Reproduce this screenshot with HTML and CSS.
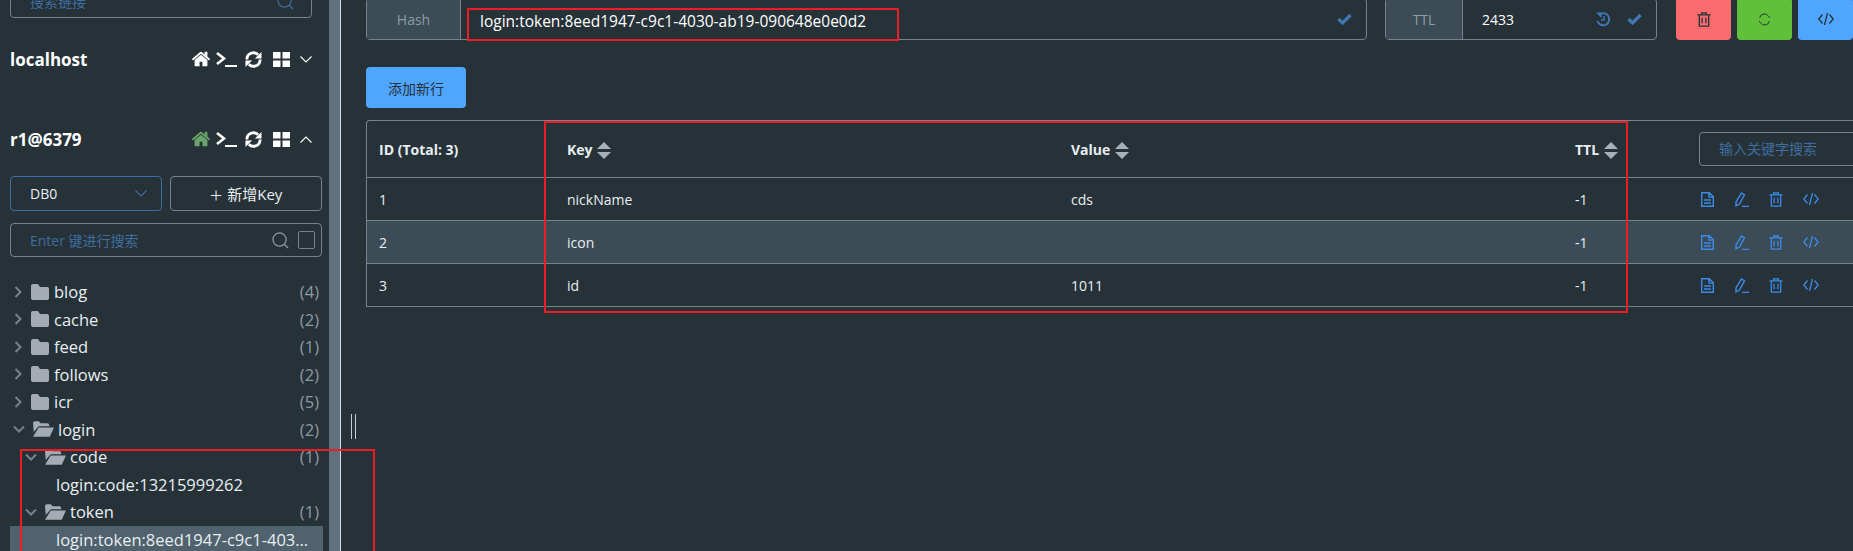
FILE: index.html
```html
<!DOCTYPE html>
<html lang="en">
<head>
    <meta charset="UTF-8">
    <meta name="viewport" content="width=device-width, initial-scale=1.0">
    <title>Redis Client</title>
    <link rel="stylesheet" href="styles.css">
</head>
<body>

<svg class="icon-defs" width="0" height="0">
    <symbol id="i-home" viewBox="0 0 1792 1792"><path fill="currentColor" d="M1472 992v480q0 26-19 45t-45 19h-384v-384h-256v384h-384q-26 0-45-19t-19-45v-480q0-1 .5-3t.5-3l575-474 575 474q1 2 1 6zm223-69l-62 74q-8 9-21 11h-3q-13 0-21-7l-692-577-692 577q-12 8-24 7-13-2-21-11l-62-74q-8-10-7-23.5t11-21.5l719-599q32-26 76-26t76 26l244 204v-195q0-14 9-23t23-9h192q14 0 23 9t9 23v408l219 182q10 8 11 21.5t-7 23.5z"/></symbol>
    <symbol id="i-term" viewBox="0 0 21 16"><path fill="none" stroke="currentColor" stroke-width="2.600" d="M1 2l7 5.500L1 13"/><path fill="none" stroke="currentColor" stroke-width="2" d="M9 15h12"/></symbol>
    <symbol id="i-sync" viewBox="0 0 18 18"><path fill="none" stroke="currentColor" stroke-width="3" d="M2 9a7 7 0 0 1 12-5M16 9a7 7 0 0 1-12 5"/><path fill="currentColor" d="M17.500 1v7h-7zM.5 17v-7h7z"/></symbol>
    <symbol id="i-grid" viewBox="0 0 17 15"><path fill="currentColor" d="M0 0h7.500v6.500H0zM9.500 0H17v6.500H9.500zM0 8.500h7.500V15H0zM9.500 8.500H17V15H9.500z"/></symbol>
    <symbol id="i-chev" viewBox="0 0 12 7"><path fill="none" stroke="currentColor" stroke-width="1.100" d="M.5.500l5.500 5.500 5.500-5.500"/></symbol>
    <symbol id="i-right" viewBox="0 0 8 12"><path fill="none" stroke="currentColor" stroke-width="2" d="M1.500 1l5 5-5 5"/></symbol>
    <symbol id="i-down" viewBox="0 0 12 8"><path fill="none" stroke="currentColor" stroke-width="2" d="M1 1.500l5 5 5-5"/></symbol>
    <symbol id="i-folder" viewBox="0 0 18 16"><path fill="currentColor" d="M2 0h5l2 3h7a2 2 0 0 1 2 2v9a2 2 0 0 1-2 2H2a2 2 0 0 1-2-2V2a2 2 0 0 1 2-2z"/></symbol>
    <symbol id="i-open" viewBox="0 0 22 16"><path fill="currentColor" d="M0 2a2 2 0 0 1 2-2h4l2 2h7a2 2 0 0 1 2 2v1H6L1 11V13zM6 6.500h16l-4.500 9.500H0z"/></symbol>
    <symbol id="i-search" viewBox="0 0 18 18"><circle cx="8" cy="8" r="7" fill="none" stroke="currentColor" stroke-width="1.300"/><path stroke="currentColor" stroke-width="1.300" d="M13 13l4 4"/></symbol>
    <symbol id="i-check" viewBox="0 0 15 12"><path fill="none" stroke="currentColor" stroke-width="3.200" d="M1.500 6l4 4 8-8"/></symbol>
    <symbol id="i-hist" viewBox="0 0 15 15"><path fill="none" stroke="currentColor" stroke-width="2" d="M3 3a6 6 0 1 1-1.500 6"/><path fill="currentColor" d="M0 .500l5.500 0-0 5.500z"/><path fill="none" stroke="currentColor" stroke-width="1.500" d="M8 4v4H5"/></symbol>
    <symbol id="i-trash" viewBox="0 0 14 16"><path fill="none" stroke="currentColor" stroke-width="1.400" d="M0 3h14M4.500 3V1h5v2M2 3v12h10V3M5 6v6M9 6v6"/></symbol>
    <symbol id="i-code" viewBox="0 0 16 12"><path fill="none" stroke="currentColor" stroke-width="1.300" d="M4.500 1.500L.8 6l3.700 4.500M11.500 1.500L15.200 6l-3.700 4.500M9.500 0l-3 12"/></symbol>
    <symbol id="i-doc" viewBox="0 0 13 15"><path fill="none" stroke="currentColor" stroke-width="1.400" d="M.7.700h7.600l4 4v9.600H.7zM8 .7v4.400h4.300M3 8h7M3 11h7"/></symbol>
    <symbol id="i-edit" viewBox="0 0 14 15"><path fill="none" stroke="currentColor" stroke-width="1.400" d="M6.500 1l3 1.800-5 9.200-3.500 1.800V10zM7 14.400h7"/></symbol>
</svg>

<aside class="sidebar">
    <div class="field conn-search">
        <span class="placeholder">搜索链接</span>
        <svg class="field-icon"><use href="#i-search"/></svg>
    </div>

    <div class="conn-row">
        <span class="conn-name">localhost</span>
        <div class="conn-icons">
            <svg class="ic-home"><use href="#i-home"/></svg>
            <svg class="ic-term"><use href="#i-term"/></svg>
            <svg class="ic-sync"><use href="#i-sync"/></svg>
            <svg class="ic-grid"><use href="#i-grid"/></svg>
            <svg class="ic-chev"><use href="#i-chev"/></svg>
        </div>
    </div>

    <div class="conn-row conn-open">
        <span class="conn-name">r1@6379</span>
        <div class="conn-icons">
            <svg class="ic-home is-on"><use href="#i-home"/></svg>
            <svg class="ic-term"><use href="#i-term"/></svg>
            <svg class="ic-sync"><use href="#i-sync"/></svg>
            <svg class="ic-grid"><use href="#i-grid"/></svg>
            <svg class="ic-chev is-up"><use href="#i-chev"/></svg>
        </div>
    </div>

    <div class="db-row">
        <div class="db-select">
            <span>DB0</span>
            <svg class="ic-chev"><use href="#i-chev"/></svg>
        </div>
        <div class="add-key">
            <span class="plus">+</span>
            <span>新增Key</span>
        </div>
    </div>

    <div class="field key-search">
        <span class="placeholder">Enter 键进行搜索</span>
        <svg class="field-icon"><use href="#i-search"/></svg>
        <span class="exact-box"></span>
    </div>

    <ul class="tree">
        <li class="node"><svg class="arrow"><use href="#i-right"/></svg><svg class="folder"><use href="#i-folder"/></svg><span class="name">blog</span><span class="count">(4)</span></li>
        <li class="node"><svg class="arrow"><use href="#i-right"/></svg><svg class="folder"><use href="#i-folder"/></svg><span class="name">cache</span><span class="count">(2)</span></li>
        <li class="node"><svg class="arrow"><use href="#i-right"/></svg><svg class="folder"><use href="#i-folder"/></svg><span class="name">feed</span><span class="count">(1)</span></li>
        <li class="node"><svg class="arrow"><use href="#i-right"/></svg><svg class="folder"><use href="#i-folder"/></svg><span class="name">follows</span><span class="count">(2)</span></li>
        <li class="node"><svg class="arrow"><use href="#i-right"/></svg><svg class="folder"><use href="#i-folder"/></svg><span class="name">icr</span><span class="count">(5)</span></li>
        <li class="node is-open"><svg class="arrow"><use href="#i-down"/></svg><svg class="folder"><use href="#i-open"/></svg><span class="name">login</span><span class="count">(2)</span></li>
        <li class="node is-open sub"><svg class="arrow"><use href="#i-down"/></svg><svg class="folder"><use href="#i-open"/></svg><span class="name">code</span><span class="count">(1)</span></li>
        <li class="node leaf"><span class="name">login:code:13215999262</span></li>
        <li class="node is-open sub"><svg class="arrow"><use href="#i-down"/></svg><svg class="folder"><use href="#i-open"/></svg><span class="name">token</span><span class="count">(1)</span></li>
        <li class="node leaf is-current"><span class="name">login:token:8eed1947-c9c1-4030-ab19-090648e0e0d2</span></li>
    </ul>
</aside>

<div class="splitter"></div>

<main class="content">
    <div class="key-bar">
        <div class="group hash-group">
            <span class="addon hash-addon">Hash</span>
            <span class="group-value">login:token:8eed1947-c9c1-4030-ab19-090648e0e0d2</span>
            <svg class="ic-check"><use href="#i-check"/></svg>
        </div>
        <div class="group ttl-group">
            <span class="addon ttl-addon">TTL</span>
            <span class="group-value">2433</span>
            <svg class="ic-hist"><use href="#i-hist"/></svg>
            <svg class="ic-check"><use href="#i-check"/></svg>
        </div>
        <button class="btn btn-red"><svg class="ic-trash"><use href="#i-trash"/></svg></button>
        <button class="btn btn-green"><svg class="ic-thin-sync" viewBox="0 0 16 16"><path fill="none" stroke="currentColor" stroke-width="1.200" d="M2 6a6 6 0 0 1 11-2l1.500 2M14 10a6 6 0 0 1-11 2L1.500 10"/></svg></button>
        <button class="btn btn-blue"><svg class="ic-code"><use href="#i-code"/></svg></button>
    </div>

    <button class="add-row">添加新行</button>

    <table class="data-table">
        <colgroup>
            <col class="col-id">
            <col class="col-key">
            <col class="col-value">
            <col class="col-ttl">
            <col>
        </colgroup>
        <thead>
            <tr>
                <th>ID (Total: 3)</th>
                <th>Key <span class="sort"></span></th>
                <th>Value <span class="sort"></span></th>
                <th>TTL <span class="sort"></span></th>
                <th><div class="table-search">输入关键字搜索</div></th>
            </tr>
        </thead>
        <tbody>
            <tr>
                <td>1</td><td>nickName</td><td>cds</td><td>-1</td>
                <td><div class="row-actions"><svg class="a-doc"><use href="#i-doc"/></svg><svg class="a-edit"><use href="#i-edit"/></svg><svg class="a-trash"><use href="#i-trash"/></svg><svg class="a-code"><use href="#i-code"/></svg></div></td>
            </tr>
            <tr class="is-hover">
                <td>2</td><td>icon</td><td></td><td>-1</td>
                <td><div class="row-actions"><svg class="a-doc"><use href="#i-doc"/></svg><svg class="a-edit"><use href="#i-edit"/></svg><svg class="a-trash"><use href="#i-trash"/></svg><svg class="a-code"><use href="#i-code"/></svg></div></td>
            </tr>
            <tr>
                <td>3</td><td>id</td><td>1011</td><td>-1</td>
                <td><div class="row-actions"><svg class="a-doc"><use href="#i-doc"/></svg><svg class="a-edit"><use href="#i-edit"/></svg><svg class="a-trash"><use href="#i-trash"/></svg><svg class="a-code"><use href="#i-code"/></svg></div></td>
            </tr>
        </tbody>
    </table>
</main>

<!-- drag handle and the red marks someone drew on the screenshot -->
<div class="drag-handle"></div>
<div class="mark mark-hash"></div>
<div class="mark mark-table"></div>
<div class="mark mark-tree"></div>

</body>
</html>
```

FILE: styles.css
```css
* {
    box-sizing: border-box;
}
body {
    font-family: "Open Sans", "Noto Sans CJK SC", sans-serif;
    font-size: 14px;
    background-color: #263238;
    color: #e8eef2;
    display: flex;
    width: 1853px;
    height: 551px;
    margin: 0;
    overflow: hidden;
    position: relative;
}
svg {
    display: block;
    flex: none;
}
.icon-defs {
    position: absolute;
}

/* sidebar */
.sidebar {
    width: 329px;
    flex: none;
    padding: 0 0 0 10px;
}
.field {
    display: flex;
    align-items: center;
    height: 34px;
    border: 1px solid #76838f;
    border-radius: 4px;
    padding: 0 9px 0 19px;
}
.placeholder {
    flex: 1;
    color: #3f6d9f;
}
.conn-search {
    width: 302px;
    margin-top: -16px;
}
.field-icon {
    width: 17px;
    height: 17px;
    color: #8c99a4;
}
.conn-search .field-icon {
    color: #3f6d9f;
    margin-right: 8px;
}
.conn-row {
    display: flex;
    align-items: center;
    justify-content: space-between;
    width: 302px;
    height: 40px;
    margin-top: 21px;
}
.conn-open {
    margin-top: 40px;
}
.conn-name {
    font-size: 17px;
    font-weight: 700;
    color: #fff;
}
.conn-icons {
    display: flex;
    align-items: center;
    color: #fff;
}
.ic-home {
    width: 20px;
    height: 20px;
}
.ic-home.is-on {
    color: #6aa36c;
}
.ic-term {
    width: 21px;
    height: 16px;
    margin-left: 5px;
}
.ic-sync {
    width: 17px;
    height: 17px;
    margin-left: 8px;
}
.ic-grid {
    width: 17px;
    height: 15px;
    margin-left: 11px;
}
.ic-chev {
    width: 12px;
    height: 7px;
    margin-left: 10px;
}
.ic-chev.is-up {
    transform: rotate(180deg);
}
.db-row {
    display: flex;
    gap: 8px;
    margin-top: 17px;
}
.db-select, .add-key {
    display: flex;
    align-items: center;
    width: 152px;
    height: 35px;
    border: 1px solid #76838f;
    border-radius: 4px;
}
.db-select {
    border-color: #3f6d9f;
    justify-content: space-between;
    padding: 0 14px 0 19px;
}
.db-select .ic-chev {
    color: #3f6d9f;
}
.add-key {
    justify-content: center;
    gap: 5px;
    font-size: 15px;
}
.plus {
    font-size: 22px;
    font-weight: 300;
    line-height: 1;
}
.key-search {
    width: 312px;
    margin-top: 12px;
    padding-right: 6px;
}
.exact-box {
    width: 17px;
    height: 18px;
    margin-left: 9px;
    border: 1px solid #76838f;
    border-radius: 2px;
}
.tree {
    list-style: none;
    width: 313px;
    margin: 21px 0 0;
    padding: 0;
    font-size: 16.5px;
}
.node {
    display: flex;
    align-items: center;
    height: 27.5px;
    padding: 0 4px 0 4px;
    white-space: nowrap;
}
.arrow {
    width: 8px;
    height: 12px;
    color: #77838c;
}
.is-open > .arrow {
    width: 12px;
    height: 8px;
    margin-left: -1px;
    margin-right: -1px;
}
.folder {
    width: 18px;
    height: 16px;
    margin-left: 9px;
    color: #a4abb2;
}
.is-open > .folder {
    width: 21px;
}
.name {
    flex: 1;
    margin-left: 5px;
    overflow: hidden;
    text-overflow: ellipsis;
}
.is-open > .name {
    margin-left: 4px;
}
.count {
    color: #8d99a3;
}
.sub {
    padding-left: 16px;
}
.leaf {
    padding-left: 41px;
    padding-right: 10px;
}
.is-current {
    background-color: #50626e;
}

.splitter {
    width: 12px;
    flex: none;
    background-color: #5f717d;
    border-right: 1px solid #d9dee2;
}

/* main */
.content {
    flex: 1;
    min-width: 0;
    padding-left: 25px;
    overflow: hidden;
}
.key-bar {
    display: flex;
    height: 42px;
    margin-top: -2px;
    width: 1540px;
}
.group {
    display: flex;
    align-items: center;
    border: 1px solid #76838f;
    border-radius: 4px;
    padding-right: 14px;
    color: #fff;
}
.hash-group {
    width: 1001px;
    margin-right: 18px;
}
.ttl-group {
    width: 272px;
    margin-right: 19px;
}
.addon {
    height: 100%;
    display: flex;
    align-items: center;
    justify-content: center;
    background-color: #3b4c57;
    border-right: 1px solid #76838f;
    color: #8f9ba4;
}
.hash-addon {
    width: 94px;
}
.ttl-addon {
    width: 77px;
}
.group-value {
    flex: 1;
    padding: 1px 0 0 19px;
}
.hash-group .group-value {
    font-size: 15.5px;
    padding-top: 3px;
}
.ic-check {
    width: 15px;
    height: 12px;
    color: #3f78b2;
}
.ic-hist {
    width: 15px;
    height: 15px;
    color: #3f78b2;
    margin-right: 16px;
}
.btn {
    width: 55px;
    height: 42px;
    flex: none;
    display: flex;
    align-items: center;
    justify-content: center;
    margin-right: 6px;
    border: none;
    border-radius: 4px;
    color: #263238;
    padding: 0;
}
.btn-red {
    background-color: #f96b6e;
}
.btn-green {
    background-color: #61c03a;
}
.btn-blue {
    background-color: #50a5ff;
}
.ic-trash {
    width: 14px;
    height: 15px;
}
.ic-thin-sync {
    width: 13px;
    height: 13px;
}
.ic-code {
    width: 16px;
    height: 12px;
}
.add-row {
    display: block;
    width: 100px;
    height: 41px;
    margin-top: 27px;
    border: none;
    border-radius: 4px;
    background-color: #50a5ff;
    color: #263238;
    font: inherit;
}
.data-table {
    table-layout: fixed;
    width: 1500px;
    margin-top: 12px;
    border-collapse: separate;
    border-spacing: 0;
    border-top: 1px solid #76838f;
    border-left: 1px solid #76838f;
    border-top-left-radius: 4px;
}
.col-id {
    width: 188px;
}
.col-key, .col-value {
    width: 504px;
}
.col-ttl {
    width: 125px;
}
.data-table th, .data-table td {
    padding: 0 12px;
    text-align: left;
    border-bottom: 1px solid #76838f;
    color: #e8eef2;
}
.data-table th {
    height: 57px;
    font-size: 14px;
    font-weight: 700;
}
.data-table td {
    height: 43px;
}
.is-hover td {
    background-color: #3b4c57;
}
.sort {
    display: inline-block;
    position: relative;
    width: 14px;
    height: 17px;
    margin-left: 1px;
    vertical-align: -4px;
}
.sort::before, .sort::after {
    content: "";
    position: absolute;
    left: 0;
    border-left: 7px solid transparent;
    border-right: 7px solid transparent;
}
.sort::before {
    top: 0;
    border-bottom: 7px solid #a8b0b8;
}
.sort::after {
    bottom: 0;
    border-top: 7px solid #a8b0b8;
}
.table-search {
    width: 300px;
    height: 34px;
    line-height: 32px;
    margin-left: -1px;
    padding-left: 19px;
    border: 1px solid #76838f;
    border-radius: 4px;
    color: #3f6d9f;
    font-weight: 400;
}
.row-actions {
    display: flex;
    align-items: center;
    color: #3d8ae8;
}
.row-actions .a-doc {
    width: 13px;
    height: 15px;
    margin-left: 1px;
}
.row-actions .a-edit {
    width: 14px;
    height: 15px;
    margin-left: 21px;
}
.row-actions .a-trash {
    width: 14px;
    height: 15px;
    margin-left: 20px;
}
.row-actions .a-code {
    width: 16px;
    height: 12px;
    margin-left: 20px;
}

/* overlays */
.drag-handle {
    position: absolute;
    left: 351px;
    top: 414px;
    width: 5px;
    height: 25px;
    border-left: 1px solid #c6ccd1;
    border-right: 1px solid #c6ccd1;
}
.mark {
    position: absolute;
    border: 2px solid #ee1c25;
}
.mark-hash {
    left: 467px;
    top: 8px;
    width: 432px;
    height: 33px;
}
.mark-table {
    left: 544px;
    top: 121px;
    width: 1084px;
    height: 192px;
}
.mark-tree {
    left: 20px;
    top: 449px;
    width: 355px;
    height: 120px;
}
```
